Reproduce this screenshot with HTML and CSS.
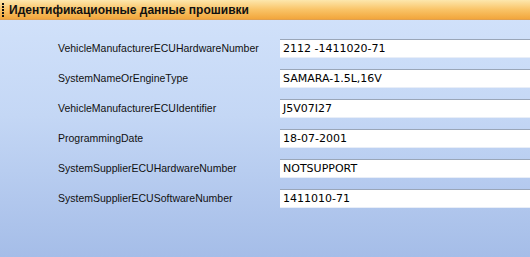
FILE: index.html
```html
<!DOCTYPE html>
<html>
<head>
<meta charset="utf-8">
<link rel="stylesheet" href="styles.css">
</head>
<body>
<div class="panel">
  <div class="header">
    <div class="grip"></div>
    <div class="title">Идентификационные данные прошивки</div>
  </div>
  <div class="content">
    <div class="row"><div class="label">VehicleManufacturerECUHardwareNumber</div><div class="value">2112 -1411020-71</div></div>
    <div class="row"><div class="label">SystemNameOrEngineType</div><div class="value">SAMARA-1.5L,16V</div></div>
    <div class="row"><div class="label">VehicleManufacturerECUIdentifier</div><div class="value">J5V07I27</div></div>
    <div class="row"><div class="label">ProgrammingDate</div><div class="value">18-07-2001</div></div>
    <div class="row"><div class="label">SystemSupplierECUHardwareNumber</div><div class="value">NOTSUPPORT</div></div>
    <div class="row"><div class="label">SystemSupplierECUSoftwareNumber</div><div class="value">1411010-71</div></div>
  </div>
</div>
</body>
</html>
```
FILE: styles.css
```css
html, body {
  margin: 0;
  padding: 0;
  width: 530px;
  height: 257px;
  overflow: hidden;
}
.panel {
  width: 530px;
  height: 257px;
  display: flex;
  flex-direction: column;
  background: linear-gradient(to bottom, #d3e3fb 0%, #c4d7f5 45%, #a5bde8 100%);
  font-family: "DejaVu Sans", sans-serif;
}
.header {
  height: 19px;
  flex: 0 0 19px;
  display: flex;
  align-items: center;
  background: linear-gradient(to bottom, #fde7ad 0%, #f9c468 50%, #f2a63c 100%);
  border-bottom: 1px solid #e0a050;
}
.grip {
  width: 2px;
  height: 14px;
  margin-left: 2px;
  margin-right: 5px;
  background: repeating-linear-gradient(to bottom, #111 0 2px, transparent 2px 3px);
}
.title {
  font-family: "Liberation Sans", Arial, sans-serif;
  font-weight: bold;
  font-size: 12px;
  color: #111;
  white-space: nowrap;
}
.content {
  display: flex;
  flex-direction: column;
  gap: 10px;
  padding-top: 18px;
  padding-left: 58px;
}
.row {
  display: flex;
  align-items: center;
  height: 20px;
}
.label {
  width: 222px;
  font-family: "Liberation Sans", Arial, sans-serif;
  font-size: 10.5px;
  color: #111;
  white-space: nowrap;
}
.value {
  flex: 1;
  height: 19px;
  box-sizing: border-box;
  background: #fff;
  border-top: 1px solid #9aa6b8;
  border-bottom: 1px solid #e8eef8;
  padding-left: 3px;
  display: flex;
  align-items: center;
  font-size: 11px;
  color: #000;
  white-space: nowrap;
}
```
